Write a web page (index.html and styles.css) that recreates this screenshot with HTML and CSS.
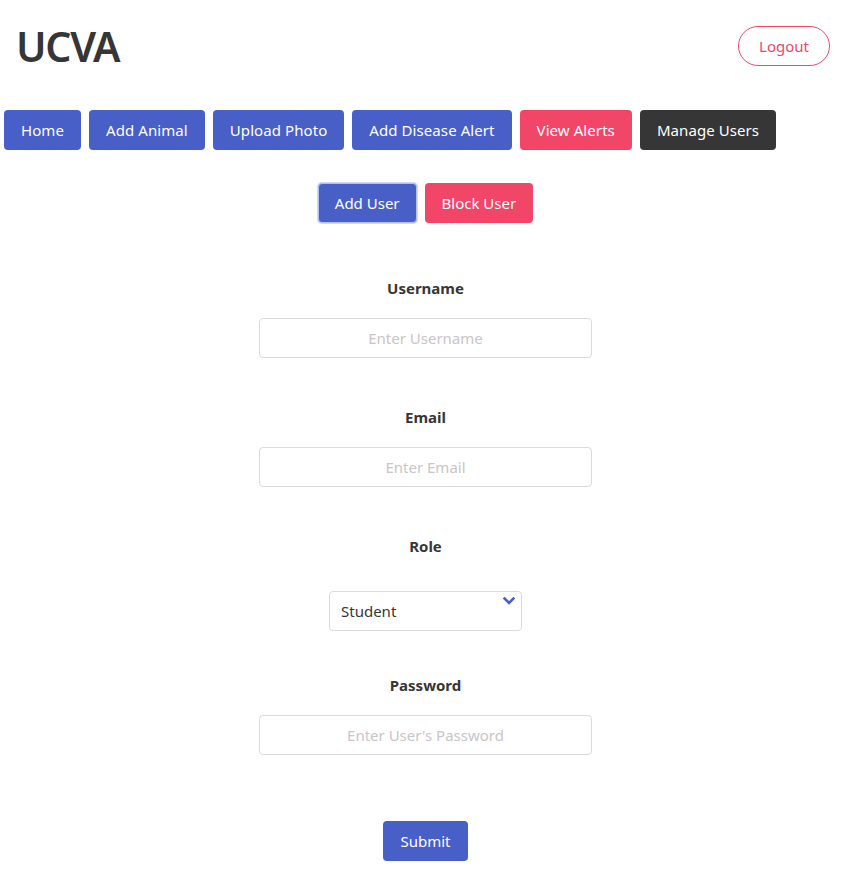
FILE: index.html
```html
<!DOCTYPE html>
<html>
<head>
<meta charset="utf-8">
<link rel="stylesheet" href="styles.css">
</head>
<body>
<header class="header">
  <h1 class="title">UCVA</h1>
  <button class="btn btn-logout">Logout</button>
</header>
<nav class="nav">
  <button class="btn btn-blue">Home</button>
  <button class="btn btn-blue">Add Animal</button>
  <button class="btn btn-blue">Upload Photo</button>
  <button class="btn btn-blue">Add Disease Alert</button>
  <button class="btn btn-red">View Alerts</button>
  <button class="btn btn-dark">Manage Users</button>
</nav>
<main class="main">
  <div class="tabs">
    <button class="btn btn-blue btn-focus">Add User</button>
    <button class="btn btn-red">Block User</button>
  </div>
  <form class="form">
    <label class="label label-user">Username</label>
    <input class="input" type="text" placeholder="Enter Username">
    <label class="label label-gap">Email</label>
    <input class="input" type="text" placeholder="Enter Email">
    <label class="label label-gap label-role">Role</label>
    <div class="select">
      <span class="select-value">Student</span>
      <svg class="chevron" width="12" height="8" viewBox="0 0 12 8"><path d="M1.5 1.5 L6 6 L10.5 1.5" fill="none" stroke="#485fc7" stroke-width="2.6" stroke-linecap="square"/></svg>
    </div>
    <label class="label label-pass">Password</label>
    <input class="input" type="password" placeholder="Enter User's Password">
    <button type="button" class="btn btn-blue btn-submit">Submit</button>
  </form>
</main>
</body>
</html>
```
FILE: styles.css
```css
* { box-sizing: border-box; }
body {
  margin: 0;
  font-family: "Noto Sans", "Open Sans", sans-serif;
  color: #363636;
  background: #fff;
}
.header {
  display: flex;
  justify-content: space-between;
  align-items: center;
  padding: 26px 24px 0 16px;
  height: 66px;
}
.title {
  margin: 0;
  font-size: 41px;
  line-height: 40px;
  font-weight: 600;
  color: #363636;
  letter-spacing: -1.3px;
}
.btn {
  font-family: inherit;
  font-size: 15px;
  height: 40px;
  padding: 0 16px;
  border: 1px solid transparent;
  border-radius: 4px;
  color: #fff;
  cursor: pointer;
  white-space: nowrap;
  line-height: 1;
}
.btn-blue { background: #485fc7; }
.btn-red { background: #f14668; }
.btn-dark { background: #363636; }
.btn-logout {
  background: #fff;
  border-color: #f14668;
  color: #f14668;
  border-radius: 9999px;
  padding: 0 20px;
  width: 92px;
}
.nav {
  display: flex;
  gap: 8px;
  margin-top: 44px;
  padding-left: 4px;
}
.nav .btn { letter-spacing: 0.08px; }
.main {
  margin-right: 3px;
}
.tabs {
  display: flex;
  justify-content: center;
  gap: 8px;
  margin-top: 33px;
}
.btn-focus {
  border-color: #b5c0ec;
  box-shadow: 0 0 0 1px rgba(72, 95, 199, 0.25);
}
.form {
  display: flex;
  flex-direction: column;
  align-items: center;
}
.label {
  display: block;
  font-weight: 700;
  font-size: 15px;
  line-height: 24px;
  color: #363636;
  margin-bottom: 18px;
}
.label-user { margin-top: 53px; }
.label-gap { margin-top: 47px; }
.label-pass { margin-top: 42px; }
.label-role { margin-bottom: 33px; }
.input {
  width: 333px;
  height: 40px;
  border: 1px solid #dbdbdb;
  border-radius: 4px;
  font-family: inherit;
  font-size: 15px;
  text-align: center;
  color: #363636;
  outline: none;
  padding: 0 11px;
}
.input::placeholder { color: #c9c5c8; }
.select {
  position: relative;
  width: 193px;
  height: 40px;
  border: 1px solid #dbdbdb;
  border-radius: 4px;
  display: flex;
  align-items: center;
  padding-left: 11px;
  font-size: 15px;
  color: #363636;
}
.chevron {
  position: absolute;
  right: 6px;
  top: 5px;
}
.btn-submit {
  margin-top: 66px;
  padding: 0 16px;
}
```
